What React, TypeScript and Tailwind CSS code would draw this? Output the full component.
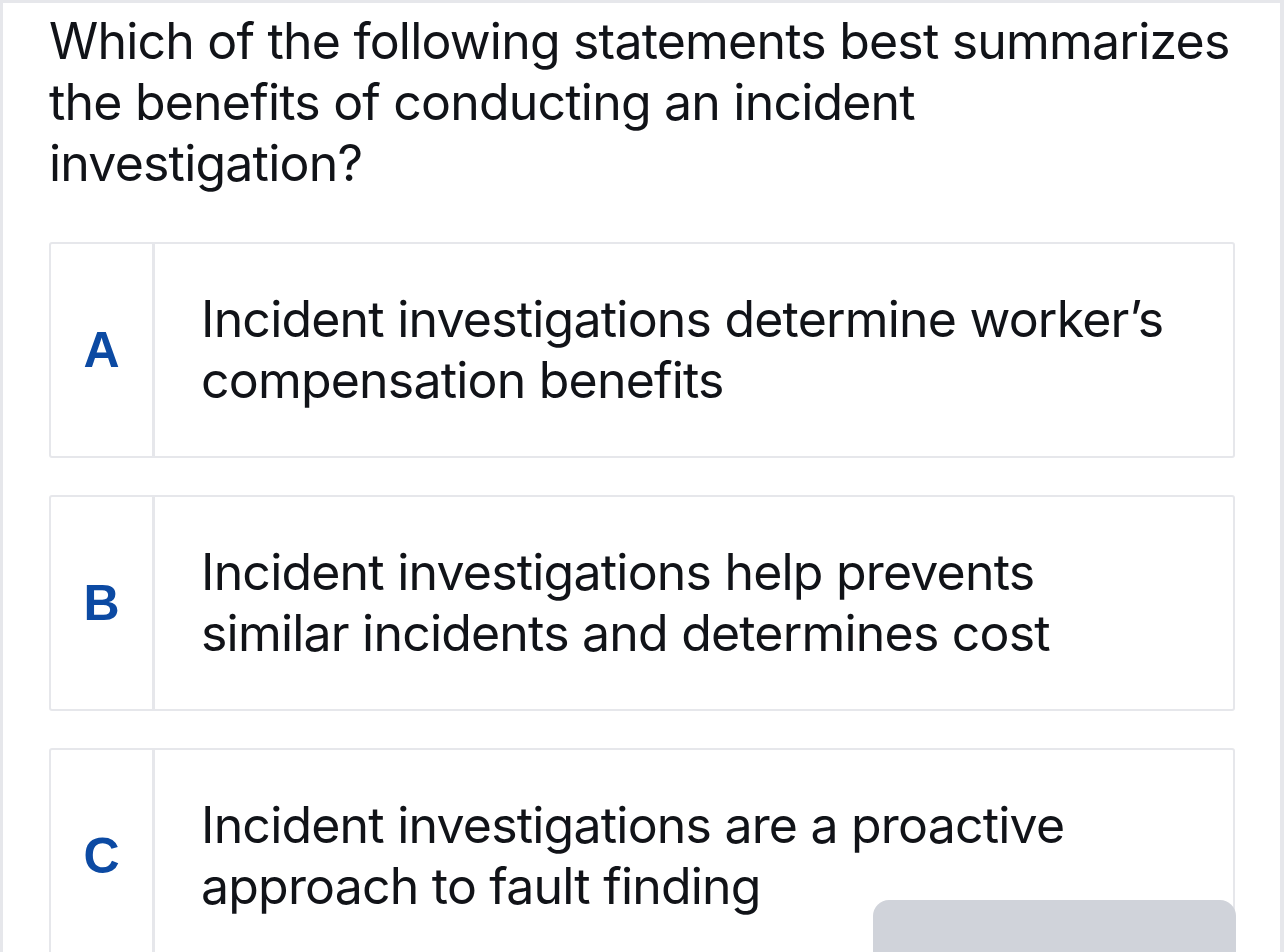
import React from "react";

const options = [
  { letter: "A", text: ["Incident investigations determine worker\u2019s", "compensation benefits"] },
  { letter: "B", text: ["Incident investigations help prevents", "similar incidents and determines cost"] },
  { letter: "C", text: ["Incident investigations are a proactive", "approach to fault finding"] },
];

const question = [
  "Which of the following statements best summarizes",
  "the benefits of conducting an incident",
  "investigation?",
];

export default function App() {
  return (
    <div
      className="relative w-[1284px] h-[952px] overflow-hidden bg-white border-t-[3px] border-l-[3px] border-r-[4px] border-[#e6e7eb] text-[#111318]"
      style={{ fontFamily: "Inter, 'Noto Sans', sans-serif" }}
    >
      <div className="pl-[46px] pr-[20px] pt-[8px] text-[50px] leading-[61px] tracking-[-0.8px] whitespace-nowrap">
        {question.map((q) => (
          <div key={q}>{q}</div>
        ))}
      </div>
      <div className="flex flex-col gap-[37px] ml-[46px] mr-[45px] mt-[48px]">
        {options.map((o) => (
          <div key={o.letter} className="flex h-[216px] border-2 border-[#e6e7eb] rounded-[3px]">
            <div
              className="w-[104px] shrink-0 flex items-center justify-center border-r-[3px] border-[#e6e7eb] text-[#0c4aa3] font-bold text-[50px]"
              style={{ fontFamily: "'Liberation Sans', Arial, sans-serif" }}
            >
              {o.letter}
            </div>
            <div className="flex flex-col justify-center pl-[46px] text-[50px] leading-[61px] tracking-[-0.8px] whitespace-nowrap">
              {o.text.map((t) => (
                <div key={t}>{t}</div>
              ))}
            </div>
          </div>
        ))}
      </div>
      <div className="absolute left-[870px] top-[897px] w-[363px] h-[80px] rounded-[16px] bg-[#d0d3da]" />
    </div>
  );
}
